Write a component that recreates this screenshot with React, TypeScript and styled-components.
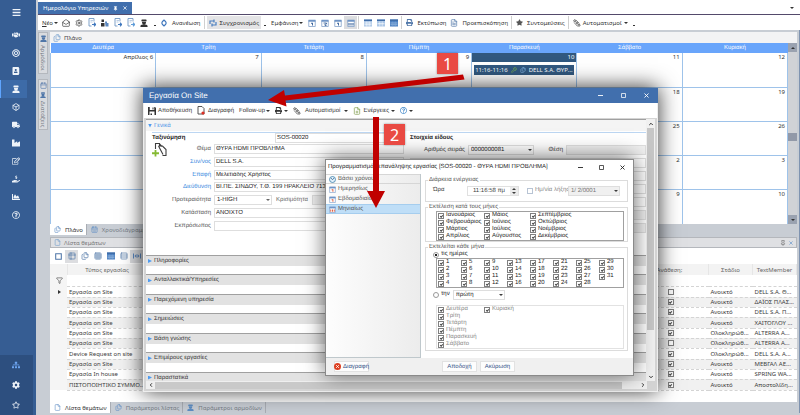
import React from "react";
import styled, { createGlobalStyle, css } from "styled-components";
import {
  FaBars, FaBullseye, FaAddressBook, FaTruck, FaIndustry, FaRegEdit, FaChartArea,
  FaRegQuestionCircle, FaSitemap, FaCog, FaRegStar, FaStar, FaPrint, FaHandshake, FaHandHoldingUsd,
} from "react-icons/fa";
import {
  Box, MailOpen, Settings, Filter, Calendar, CalendarDays, Table2, Rows3, Grid3x3,
  File, Files, FileText, FilePlus, Wrench, Pin, ChevronLeft, ChevronRight, ChevronUp, ChevronDown,
} from "lucide-react";

const Global = createGlobalStyle`
  *, *::before, *::after { box-sizing: border-box; }
  body { margin: 0; background: #fff; }
  button, input, select { font: inherit; color: inherit; text-rendering: inherit; margin: 0; padding: 0; border: 0; background: none; min-width: 0; }
  button { white-space: nowrap; }
  svg { display: block; flex: none; }
`;

const font = `"Noto Sans", "Open Sans", sans-serif`;
const narrowFont = `"Liberation Sans", Arial, sans-serif`;
const blue = "#416fad";
const steel = "#4f76a8";

/* ---------- shell ---------- */
const Page = styled.div`
  position: relative;
  display: flex;
  min-height: 100vh;
  overflow: hidden;
  font: 6px/10px ${font};
  color: #3c3c3c;
  background: #c8cdd4;
`;
const Sidebar = styled.nav`
  width: 36px;
  flex: none;
  display: flex;
  flex-direction: column;
  padding-top: 3px;
  background: #365d93;
  color: #eef3f9;
`;
const NavGroup = styled.div<{ $foot?: boolean }>`
  display: flex;
  flex-direction: column;
  ${(p) => p.$foot && css`
    margin-top: auto;
    width: 33px;
    background: #2d4f7f;
  `}
`;
const NavButton = styled.button<{ $active?: boolean; $tall?: boolean; $tint?: boolean }>`
  width: 27px;
  height: ${(p) => (p.$tall ? 20 : 18)}px;
  padding-left: 4px;
  display: flex;
  align-items: center;
  justify-content: center;
  color: ${(p) => (p.$tint ? "#6ea6f2" : "inherit")};
  background: ${(p) => (p.$active ? "#3d6ba8" : "none")};
  border-left: 1px solid ${(p) => (p.$active ? "#5fa5ff" : "transparent")};
  &:first-child { margin-bottom: ${(p) => (p.$tall ? 0 : 5)}px; }
`;
const Main = styled.main`
  flex: 1;
  min-width: 0;
  display: flex;
  flex-direction: column;
  padding: 0 0 2px 2px;
`;
const DocTabs = styled.div`
  height: 15px;
  display: flex;
  align-items: flex-end;
  justify-content: space-between;
  background: #fff;
  border-bottom: 1px solid #544a6b;
`;
const DocTab = styled.button`
  height: 12px;
  padding: 0 5px;
  display: flex;
  align-items: center;
  gap: 5px;
  background: ${blue};
  color: #fff;
`;
const Caret = styled.span`
  display: inline-block;
  flex: none;
  border: 2px solid transparent;
  border-top-color: currentColor;
  border-bottom-width: 0;
`;
const UpCaret = styled.span`
  border: 2px solid transparent;
  border-bottom-color: currentColor;
  border-top-width: 0;
`;
const DropButton = styled.button`
  width: 16px;
  height: 14px;
  color: #333;
`;
const Toolbar = styled.div<{ $tall?: boolean; $loose?: boolean }>`
  height: ${(p) => (p.$tall ? 16 : 15)}px;
  flex: none;
  display: flex;
  align-items: center;
  gap: ${(p) => (p.$loose ? 1 : 0)}px;
  background: #fff;
  padding: 0 2px;
  color: #333;
`;
const Tool = styled.button<{ $on?: boolean; $gap?: number }>`
  height: 13px;
  padding: 0 2px;
  display: flex;
  align-items: center;
  gap: ${(p) => p.$gap ?? 2}px;
  background: ${(p) => (p.$on ? "#e4e4e6" : "none")};
`;
const IconTool = styled.button<{ $on?: boolean; $dark?: boolean }>`
  width: 13px;
  height: 13px;
  flex: none;
  display: grid;
  place-items: center;
  color: ${(p) => (p.$dark ? "#333" : steel)};
  background: ${(p) => (p.$on ? "#dcdde0" : "none")};
`;
const Sep = styled.i`
  width: 1px;
  height: 13px;
  margin: 0 2px 0 1px;
  background: #d0d0d0;
`;
const More = styled.span`
  width: 2px;
  height: 1px;
  margin: 6px 3px 0;
  background: #333;
`;
const Body = styled.div`
  flex: 1;
  display: flex;
  gap: 2px;
  padding-top: 2px;
  min-height: 0;
  border-right: 1px solid #7f93b0;
`;
const SideTabs = styled.div`
  width: 10px;
  display: flex;
  flex-direction: column;
  gap: 5px;
`;
const SideTab = styled.button`
  width: 10px;
  display: flex;
  flex-direction: column;
  align-items: center;
  gap: 3px;
  padding: 2px 0;
  border: 1px solid #b4b8be;
  background: #d9dbdf;
  color: #777d86;
  span { writing-mode: vertical-rl; line-height: 8px; }
  svg { color: ${steel}; }
`;
const Panels = styled.div`
  flex: 1;
  min-width: 0;
  display: flex;
  flex-direction: column;
  padding-right: 2px;
`;
const PanelHead = styled.div<{ $low?: boolean }>`
  height: 11px;
  flex: none;
  display: flex;
  align-items: center;
  gap: 3px;
  padding: 0 3px;
  margin-top: ${(p) => (p.$low ? 2 : 0)}px;
  background: ${(p) => (p.$low ? "#dfe0e3" : "#f3f3f4")};
  border: ${(p) => (p.$low ? "1px solid #b4b7bc" : "0")};
  color: ${(p) => (p.$low ? "#777" : "#444")};
  svg { color: #6f9ccb; }
`;
const Spacer = styled.span`
  flex: 1;
`;

/* ---------- calendar ---------- */
const CalWrap = styled.div`
  height: 181px;
  flex: none;
  display: flex;
`;
const CalArea = styled.div`
  flex: 1;
  min-width: 0;
`;
const Cal = styled.table`
  width: 100%;
  height: 181px;
  border-collapse: collapse;
  table-layout: fixed;
  background: #fff;
  th {
    height: 10px;
    padding: 0;
    background: #69a5fb;
    color: #fff;
    font: 6px/10px ${narrowFont};
    text-rendering: geometricPrecision;
  }
  tbody tr { height: 34px; }
  td {
    border: 1px solid #9ec3ea;
    border-top-width: 0;
    padding: 0;
    vertical-align: top;
    text-align: right;
    line-height: 8px;
  }
  tr:last-child td { border-bottom: 0; }
`;
const DayNo = styled.div<{ $today?: boolean }>`
  padding: 0 2px;
  height: 9px;
  color: ${(p) => (p.$today ? "#fff" : "#333")};
  background: ${(p) => (p.$today ? "#31587f" : "none")};
`;
const Event = styled.button`
  display: flex;
  align-items: center;
  gap: 3px;
  width: calc(100% - 4px);
  height: 10px;
  margin: 3px 2px 0;
  padding: 0 1px;
  background: #31587f;
  color: #fff;
  font: 6px/9px ${font};
  overflow: hidden;
`;
const VBar = styled.div<{ $dark?: boolean }>`
  width: 9px;
  flex: none;
  display: flex;
  flex-direction: column;
  background: ${(p) => (p.$dark ? "#d0d2d6" : "#f0f0f0")};
  color: #333;
`;
const BarEnd = styled.button<{ $dark?: boolean }>`
  width: 9px;
  height: 9px;
  flex: none;
  display: grid;
  place-items: center;
  background: ${(p) => (p.$dark ? "#9aa2b0" : "none")};
`;
const CalThumb = styled.div`
  height: 8px;
  margin-top: 81px;
  background: #9299a8;
`;

const TabStrip = styled.div`
  height: 11px;
  flex: none;
  display: flex;
`;
const Tab = styled.button<{ $on?: boolean }>`
  display: flex;
  align-items: center;
  gap: 4px;
  padding: 0 3px 0 4px;
  height: 11px;
  border-right: 1px solid #a9adb4;
  background: ${(p) => (p.$on ? "#fff" : "none")};
  color: ${(p) => (p.$on ? "#333" : "#777d86")};
  svg { color: #5f8ec4; }
`;

/* ---------- task list ---------- */
const ListWrap = styled.div`
  flex: 1;
  min-height: 0;
  background: #fff;
`;
const List = styled.table`
  width: 100%;
  border-collapse: collapse;
  table-layout: fixed;
  line-height: 8px;
  th {
    height: 11px;
    padding: 0;
    font-weight: 400;
    color: #666;
    background: #f3f3f3;
    border-right: 1px solid #e6e6e6;
  }
  td {
    padding: 0 0 0 2px;
    border-bottom: 1px dashed #d4d4d4;
    white-space: nowrap;
  }
  td:first-child { background: #f5f5f5; border-bottom: 0; }
  svg { margin: 0 auto; }
`;
const ListRow = styled.tr<{ $alt?: boolean; $tall?: boolean }>`
  height: ${(p) => (p.$tall ? 11 : 10)}px;
  background: ${(p) => (p.$alt ? "#f1f1f1" : "#fff")};
`;
const Cell = styled.td<{ $center?: boolean }>`
  text-align: ${(p) => (p.$center ? "center" : "left")};
`;
const RowMark = styled.i`
  display: inline-block;
  border: 2px solid transparent;
  border-left: 3px solid #333;
  border-right-width: 0;
`;
const Tick = styled.input`
  appearance: none;
  width: 6px;
  height: 6px;
  flex: none;
  display: inline-grid;
  place-items: center;
  vertical-align: middle;
  border: 1px solid #808080;
  background: #fff;
  &:checked::after {
    content: "";
    width: 3px;
    height: 2px;
    border: solid #444;
    border-width: 0 0 1px 1px;
    transform: rotate(-45deg);
  }
  &:disabled { border-color: #b8c4d4; }
`;
const Radio = styled.input`
  appearance: none;
  width: 6px;
  height: 6px;
  flex: none;
  display: inline-grid;
  place-items: center;
  border: 1px solid #999;
  border-radius: 50%;
  background: #fff;
  &:checked::after { content: ""; width: 2px; height: 2px; background: #222; }
`;

/* ---------- windows ---------- */
const Window = styled.section<{ $x: number; $y: number; $w: number; $h: number; $inner?: boolean }>`
  position: absolute;
  left: ${(p) => p.$x}px;
  top: ${(p) => p.$y}px;
  width: ${(p) => p.$w}px;
  height: ${(p) => p.$h}px;
  display: flex;
  flex-direction: column;
  text-rendering: geometricPrecision;
  font-family: ${narrowFont};
  background: ${(p) => (p.$inner ? "#fff" : "#d4d4d4")};
  border: 1px solid ${(p) => (p.$inner ? "#8a8a8a" : "#eee")};
  box-shadow: 0 -1px 20px rgba(0, 0, 0, ${(p) => (p.$inner ? 0.6 : 0.8)});
`;
const TitleBar = styled.header<{ $plain?: boolean }>`
  height: ${(p) => (p.$plain ? 14 : 15)}px;
  flex: none;
  display: flex;
  align-items: center;
  padding-left: ${(p) => (p.$plain ? 2 : 6)}px;
  font-size: ${(p) => (p.$plain ? 6 : 8)}px;
  background: ${(p) => (p.$plain ? "#fff" : blue)};
  color: ${(p) => (p.$plain ? "#222" : "#fff")};
  margin: ${(p) => (p.$plain ? "0" : "-1px -1px 0")};
  h2 { flex: 1; margin: 0; font: inherit; white-space: nowrap; }
`;
const WinButton = styled.button<{ $narrow?: boolean }>`
  width: ${(p) => (p.$narrow ? 21 : 23)}px;
  height: 13px;
  display: grid;
  place-items: center;
`;
const FormArea = styled.div`
  flex: 1;
  min-height: 0;
  margin: 1px 2px 0;
  display: flex;
`;
const FormScroll = styled.div`
  flex: 1;
  min-width: 0;
  overflow: hidden;
  background: #fff;
`;
const SectionHead = styled.button<{ $open?: boolean }>`
  width: 100%;
  height: ${(p) => (p.$open ? 12 : 11)}px;
  display: flex;
  align-items: center;
  gap: 2px;
  padding-left: 2px;
  text-align: left;
  border-top: 1px solid #a0a0a0;
  background: ${(p) => (p.$open ? "#f4f4f4" : "#e2e2e2")};
  color: ${(p) => (p.$open ? "#4b93e8" : "#333")};
`;
const Mark = styled.i<{ $open?: boolean }>`
  width: 4px;
  height: 4px;
  flex: none;
  background: #4e9bf0;
  clip-path: ${(p) => (p.$open ? "polygon(0 0, 100% 0, 50% 100%)" : "polygon(0 0, 100% 50%, 0 100%)")};
`;
const General = styled.div`
  height: 124px;
  display: grid;
  grid-template-columns: 258px 1fr;
  line-height: 8px;
`;
const Half = styled.div`
  position: relative;
  padding: 1px 0 0 6px;
`;
const HalfTop = styled.div`
  height: 10px;
  display: grid;
  grid-template-columns: 123px 1fr;
  align-items: center;
  border-top: 1px solid #bcd6f2;
  font-weight: 700;
  white-space: nowrap;
  color: #222;
`;
const Value = styled.input<{ $off?: boolean }>`
  width: 100%;
  height: 10px;
  padding: 0 1px;
  border: 1px solid #dedede;
  background: ${(p) => (p.$off ? "#f0f0f0" : "#fff")};
  font-weight: 400;
  color: #222;
`;
const Fields = styled.div`
  height: 89px;
  margin-top: 1px;
  display: grid;
  grid-template-columns: 59px 1fr;
  grid-auto-rows: 1fr;
  column-gap: 3px;
  align-items: center;
`;
const FieldLabel = styled.label<{ $link?: boolean }>`
  text-align: right;
  white-space: nowrap;
  color: ${(p) => (p.$link ? "#3a8ae0" : "#555")};
`;
const Side = styled.div`
  display: grid;
  grid-template-columns: 58px 32px 1fr;
  gap: 4px;
  align-items: center;
  color: #666;
`;
const Picker = styled.div<{ $w?: number }>`
  position: relative;
  width: ${(p) => (p.$w ? p.$w + "px" : "100%")};
  select {
    display: block;
    appearance: none;
    width: 100%;
    height: 10px;
    padding: 0 2px;
    border: 1px solid #dedede;
    background: #fff;
    line-height: 8px;
    color: #222;
  }
  select:disabled { background: #f0f0f0; color: #777; opacity: 1; }
  ${Caret} { position: absolute; right: 2px; top: 4px; }
`;
const AddDoc = styled.div`
  position: absolute;
  left: 6px;
  top: 11px;
`;
const RightFields = styled.div`
  margin-top: 3px;
  display: grid;
  grid-template-columns: 55px 66px 26px 1fr;
  grid-auto-rows: 10px;
  gap: 3px;
  align-items: center;
  text-align: right;
`;
const Wide = styled.div`
  grid-column: 1 / -1;
`;
const Folded = styled.div`
  display: grid;
  grid-auto-rows: 1fr;
  height: 136px;
`;
const HBar = styled.div`
  height: 8px;
  flex: none;
  margin: 0 10px 2px 2px;
  display: flex;
  align-items: center;
  background: #efefef;
`;
const HThumb = styled.div`
  flex: 1;
  height: 7px;
  margin-right: 16px;
  background: #c9c9c9;
`;
const VThumb = styled.div`
  height: 202px;
  margin: 0 1px;
  background: #c6c6c6;
`;

/* ---------- recurrence dialog ---------- */
const Split = styled.div`
  flex: 1;
  min-height: 0;
  display: flex;
`;
const Modes = styled.div`
  width: 95px;
  flex: none;
  border-right: 1px solid #bfc8cc;
  border-bottom: 1px solid #bfc8cc;
  background: linear-gradient(90deg, #fdfdfd, #ececec);
`;
const Mode = styled.button<{ $on?: boolean; $head?: boolean }>`
  width: 100%;
  height: 10px;
  padding-left: 3px;
  display: flex;
  align-items: center;
  gap: 2px;
  line-height: 8px;
  color: #555;
  border: solid ${(p) => (p.$on ? "#a5cdee" : "#d6d6d6")};
  border-width: ${(p) => (p.$on || p.$head ? "1px 0" : "0")};
  background: ${(p) => (p.$on ? "#bfdef7" : "none")};
`;
const Groups = styled.form`
  flex: 1;
  min-width: 0;
  padding: 3px 5px 0 4px;
  line-height: 7px;
`;
const Group = styled.fieldset<{ $h: number }>`
  height: ${(p) => p.$h}px;
  margin: 0 0 2px;
  padding: 0 3px 0 7px;
  border: 1px solid #dcdcdc;
  min-width: 0;
  legend { margin-left: -5px; padding: 0 1px; line-height: 7px; color: #555; }
`;
const Line = styled.div`
  display: flex;
  align-items: center;
  gap: 3px;
  height: 13px;
`;
const Labelled = styled.label<{ $dim?: boolean }>`
  display: flex;
  align-items: center;
  gap: 2px;
  height: 7px;
  white-space: nowrap;
  color: ${(p) => (p.$dim ? "#888" : "#222")};
`;
const TimeLabel = styled.label`
  width: 31px;
`;
const TimeBox = styled.div`
  width: 52px;
  height: 10px;
  margin-right: 5px;
  display: flex;
  border: 1px solid #e0e0e0;
  input { flex: 1; text-align: center; line-height: 8px; }
`;
const Spin = styled.button`
  width: 8px;
  display: grid;
  place-items: center;
  background: #ececec;
`;
const ExpiryLabel = styled(Labelled)`
  width: 38px;
`;
const Choices = styled.div<{ $rows: number; $col: number; $soft?: boolean }>`
  margin: ${(p) => (p.$soft ? 4 : 0)}px 0 0 3px;
  padding-left: 1px;
  display: grid;
  grid-auto-flow: column;
  grid-template-rows: repeat(${(p) => p.$rows}, 7px);
  grid-auto-columns: ${(p) => p.$col}px;
  border: 1px solid ${(p) => (p.$soft ? "#e2e2e2" : "#a0a0a0")};
`;
const Footer = styled.footer`
  height: 17px;
  flex: none;
  display: flex;
  align-items: center;
  gap: 3px;
  padding: 0 118px 0 8px;
  background: #f0f0f0;
`;
const PushButton = styled.button`
  width: 35px;
  height: 11px;
  display: flex;
  align-items: center;
  justify-content: center;
  gap: 2px;
  background: #fdfdfd;
  border: 1px solid #e2e2e2;
  color: #2f4f85;
`;

/* ---------- annotations ---------- */
const Arrows = styled.svg`
  position: absolute;
  left: 0;
  top: 0;
  pointer-events: none;
`;
const Badge = styled.div<{ $x: number; $y: number }>`
  position: absolute;
  left: ${(p) => p.$x}px;
  top: ${(p) => p.$y}px;
  width: 21px;
  height: 21px;
  display: grid;
  place-items: center;
  background: #e94a43;
  color: #fff;
  font: 16px/20px ${font};
  box-shadow: 0 0 2px rgba(0, 0, 0, 0.4);
`;

const Worker = ({ size = 9 }: { size?: number }) => (
  <svg width={size} height={size} viewBox="0 0 18 18" fill="currentColor">
    <path d="M3 4 4 1h10l1 3v1H3zM4.500 6h9v2a4.500 4.500 0 0 1-9 0zM1 18v-2c0-2 2-3 5-3.500h6c3 .5 5 1.500 5 3.500v2z" />
  </svg>
);
const CalendarIcon = ({ size = 8, n = 2, orange = false }: { size?: number; n?: number; orange?: boolean }) => (
  <svg width={size} height={size} viewBox="0 0 16 16">
    <path d="M1.500 3h13v12h-13z" fill="#fff" stroke="#7d9cc6" strokeWidth="1.500" />
    <path d="M1 1.500h14V5.500H1z" fill="#6f94c6" />
    {n === 1 && <path d="M6 7.500h4V13H8V9.500H6z" fill={orange ? "#e05a3a" : "#41699f"} />}
    {n === 2 && <path d="M5 8h6v2H8v3h3" fill="none" stroke={orange ? "#e05a3a" : "#41699f"} strokeWidth="1.800" />}
    {n === 3 && <path d="M4 8v5M8 8v5M12 8v5" stroke={orange ? "#e05a3a" : "#41699f"} strokeWidth="2.200" />}
  </svg>
);
const GridIcon = ({ rows = 3, solid = false }: { rows?: number; solid?: boolean }) => (
  <svg width="8" height="8" viewBox="0 0 16 16">
    <path d="M0 1h16v14H0z" fill={solid ? "#4a7fc0" : "#a9c5e6"} />
    <path d="M0 1h16v3H0z" fill="#3f6da8" />
    <path d={rows === 2 ? "M1 9.500h14" : "M1 8h14M1 11.500h14"} stroke={solid ? "#a9c5e6" : "#fff"} strokeWidth="1.500" />
    <path d="M5.500 5v10M10.500 5v10" stroke={solid ? "#84aadb" : "#fff"} />
  </svg>
);
const SyncIcon = () => (
  <svg width="8" height="8" viewBox="0 0 16 16" fill="none" stroke="#4a7fc0" strokeWidth="2.400">
    <path d="M2 10V4h8M10 1v6M14 6v6H6M6 9v6" />
  </svg>
);
const Diamond = () => (
  <svg width="6" height="8" viewBox="0 0 12 16" fill="none" stroke="#3f77bd" strokeWidth="2.400">
    <path d="M2 6l4-4 4 4M2 10l4 4 4-4M2 6v4M10 6v4" />
  </svg>
);
const GearsIcon = () => (
  <svg width="8" height="8" viewBox="0 0 16 16" fill="none" stroke="#555" strokeWidth="1.800">
    <circle cx="3.500" cy="3.500" r="2" /><circle cx="8" cy="8" r="2" /><circle cx="12" cy="12.500" r="2" />
    <path d="M6 2l7 7M2 7l7 8" strokeWidth="1.200" />
  </svg>
);
const LinkedPeople = () => (
  <svg width="8" height="8" viewBox="0 0 16 16">
    <path d="M1 1h5v5H1zM0 8h7v7H0z" fill="#333" />
    <path d="M8 5h4v3h3v7H9z" fill="#5b87bf" />
  </svg>
);
const ArrowsInward = () => (
  <svg width="8" height="6" viewBox="0 0 16 12" fill="#5b87bf">
    <path d="M0 1h2v10H0zM3 6l4-4v8zM14 1h2v10h-2zM13 6l-4-4v8z" />
  </svg>
);
const DocMove = ({ a = "#3f77bd" }: { a?: string }) => (
  <svg width="8" height="9" viewBox="0 0 16 18" fill="none">
    <path d="M12 7V1H2v15h5" stroke="#7397c3" strokeWidth="1.800" />
    <path d="M5 5h5M5 8h4" stroke="#9db8d8" strokeWidth="1.400" />
    <path d="M8 13h7M12 9.500l3.500 3.500-3.500 3.500" stroke={a} strokeWidth="2.200" />
  </svg>
);
const DeleteDoc = () => (
  <svg width="8" height="9" viewBox="0 0 16 18">
    <path d="M2 1h8l4 4v11H2z" fill="#fff" stroke="#444" strokeWidth="1.800" />
    <circle cx="12" cy="14" r="3.200" fill="#dd2f24" />
  </svg>
);
const SaveIcon = () => (
  <svg width="8" height="8" viewBox="0 0 16 16">
    <path d="M0 0h14l2 2v14H0z" fill="#333" />
    <path d="M3.500 0h9v6h-9zM3 9h10v7H3z" fill="#fff" />
    <path d="M9 1h2v4H9zM5 13h3v3H5z" fill="#333" />
  </svg>
);
const ClockIcon = () => (
  <svg width="7" height="7" viewBox="0 0 14 14">
    <circle cx="7" cy="7" r="6" fill="#e2f0fb" stroke="#3b7fa8" strokeWidth="1.600" />
    <path d="M4 4l3 3.500L10 4" fill="none" stroke="#2a5e8a" strokeWidth="1.400" />
  </svg>
);
const RedCross = () => (
  <svg width="7" height="7" viewBox="0 0 14 14">
    <circle cx="7" cy="7" r="7" fill="#dd3f22" />
    <path d="M4.500 4.500l5 5M9.500 4.500l-5 5" stroke="#fff" strokeWidth="2" />
  </svg>
);
const AddDocIcon = () => (
  <svg width="15" height="15" viewBox="0 0 30 30" fill="none">
    <path d="M7 14V3h8v5M15 4l5 5M13 8h8l7 7v12h-7M13 8l9 17" stroke="#3d3d3d" strokeWidth="2.200" />
    <path d="M7 16v13M0 22.500h14" stroke="#86ba33" strokeWidth="3.600" />
  </svg>
);
const Cross = ({ s = 5 }: { s?: number }) => (
  <svg width={s} height={s} viewBox="0 0 10 10" stroke="currentColor" strokeWidth="1.800"><path d="M1 1l8 8M9 1l-8 8" /></svg>
);
const Square = ({ s = 5 }: { s?: number }) => (
  <svg width={s} height={s} viewBox="0 0 10 10" fill="none" stroke="currentColor" strokeWidth="1.500"><path d="M1 1h8v8H1z" /></svg>
);
const Dash = ({ s = 5 }: { s?: number }) => (
  <svg width={s} height={s} viewBox="0 0 10 10" stroke="currentColor" strokeWidth="1.800"><path d="M0 5h10" /></svg>
);
const WinButtons = ({ narrow = false }: { narrow?: boolean }) => (
  <>
    <WinButton $narrow={narrow} aria-label="Ελαχιστοποίηση"><Dash /></WinButton>
    <WinButton $narrow={narrow} aria-label="Μεγιστοποίηση"><Square /></WinButton>
    <WinButton $narrow={narrow} aria-label="Κλείσιμο"><Cross /></WinButton>
  </>
);

const navIcons = [
  <FaBars size={9} />, <FaHandshake size={8} />, <FaBullseye size={8} />, <FaAddressBook size={8} />, <Worker size={8} />,
  <Box size={8} strokeWidth={2.5} />, <FaTruck size={8} />, <FaIndustry size={8} />, <FaRegEdit size={8} />,
  <FaHandHoldingUsd size={8} />, <FaChartArea size={8} />, <FaRegQuestionCircle size={8} />,
];
const days = ["Δευτέρα", "Τρίτη", "Τετάρτη", "Πέμπτη", "Παρασκευή", "Σάββατο", "Κυριακή"];
const weeks = [
  ["Απρίλιος 6", 7, 8, 9, 10, 11, 12],
  [13, 14, 15, 16, 17, 18, 19],
  [20, 21, 22, 23, 24, 25, 26],
  [27, 28, 29, 30, 1, 2, 3],
  [4, 5, 6, 7, 8, 9, 10],
];
const tasks: [string, boolean, string, string][] = [
  ["Εργασία on Site", false, "Ανοικτό", "DELL S.A. Θ..."],
  ["Εργασία on Site", true, "Ανοικτό", "ΔΑΪΟΣ ΠΛΑΣ..."],
  ["Εργασία on Site", true, "Ανοικτό", "DELL S.A. Π..."],
  ["Εργασία on Site", true, "Ανοικτό", "ΧΑΙΤΟΓΛΟΥ ..."],
  ["Εργασία on Site", true, "Ολοκληρώθ...", "ALTERRA A..."],
  ["Εργασία on Site", false, "Ολοκληρώθ...", "ALTERRA A..."],
  ["Device Request on site", true, "Ολοκληρώθ...", "DELL S.A. A..."],
  ["Εργασία on Site", true, "Ανοικτό", "ΜΕΒΓΑΛ ΑΕ..."],
  ["Εργασία In house", true, "Ανοικτό", "SPRING WA..."],
  ["ΠΙΣΤΟΠΟΙΗΤΙΚΟ ΣΥΜΜΟ...", true, "Ανοικτό", "Αποστολίδη..."],
];
const months = ["Ιανουάριος", "Φεβρουάριος", "Μάρτιος", "Απρίλιος", "Μάιος", "Ιούνιος", "Ιούλιος", "Αύγουστος", "Σεπτέμβριος", "Οκτώβριος", "Νοέμβριος", "Δεκέμβριος"];
const folded = ["Πληροφορίες", "Ανταλλακτικά/Υπηρεσίες", "Παρεχόμενη υπηρεσία", "Σημειώσεις", "Βάση γνώσης", "Επιμέρους εργασίες", "Παραστατικά"];

const MainToolbar = () => (
  <Toolbar>
    <Tool $gap={1}><span><u>Ν</u>έο</span><Caret /></Tool>
    <IconTool $dark><MailOpen size={8} /></IconTool>
    <IconTool $dark><Settings size={8} /></IconTool>
    <IconTool><DocMove /></IconTool>
    <IconTool><LinkedPeople /></IconTool>
    <IconTool><DocMove /></IconTool>
    <IconTool><DocMove a="#5e9bd8" /></IconTool>
    <IconTool $dark><Worker size={8} /></IconTool>
    <More />
    <Tool $gap={5}><Diamond />Ανανέωση</Tool>
    <Sep />
    <Tool $on $gap={3}><SyncIcon />Συγχρονισμός</Tool>
    <More />
    <Tool $gap={1}>Εμφάνιση<Caret /></Tool>
    <IconTool><CalendarIcon n={1} /></IconTool>
    <IconTool><CalendarIcon n={2} /></IconTool>
    <IconTool><CalendarIcon n={1} /></IconTool>
    <IconTool $on><CalendarIcon n={3} /></IconTool>
    <Sep />
    <IconTool><GridIcon /></IconTool>
    <IconTool><GridIcon rows={2} /></IconTool>
    <IconTool><GridIcon solid /></IconTool>
    <Sep />
    <Tool $gap={4}><FaPrint size={7} color={steel} />Εκτύπωση</Tool>
    <Tool $gap={4}><FileText size={8} color={steel} />Προεπισκόπηση</Tool>
    <Sep />
    <Tool $gap={4}><FaStar size={7} color="#555" />Συντομεύσεις</Tool>
    <Sep />
    <Tool><GearsIcon />Αυτοματισμοί<Caret /></Tool>
    <More />
  </Toolbar>
);

const WeekGrid = () => (
  <CalWrap>
    <CalArea>
      <Cal>
        <thead><tr>{days.map((d) => <th key={d}>{d}</th>)}</tr></thead>
        <tbody>
          {weeks.map((w, r) => (
            <tr key={r}>
              {w.map((d, c) => (
                <td key={c}>
                  <DayNo $today={r === 0 && c === 4}>{d}</DayNo>
                  {r === 0 && c === 4 && (
                    <Event>11:16-11:16<Wrench size={6} color="#8bc34a" /><Files size={6} color="#8fc1f0" />DELL S.A. ΘΥΡ...</Event>
                  )}
                </td>
              ))}
            </tr>
          ))}
        </tbody>
      </Cal>
    </CalArea>
    <VBar $dark>
      <BarEnd $dark aria-label="Πάνω"><UpCaret /></BarEnd>
      <CalThumb />
      <Spacer />
      <BarEnd $dark aria-label="Κάτω"><Caret /></BarEnd>
    </VBar>
  </CalWrap>
);

const TaskList = () => (
  <ListWrap>
    <List>
      <colgroup>
        <col width="17" /><col width="80" /><col /><col width="78" /><col width="44" /><col width="44" />
      </colgroup>
      <thead><tr><th /><th>Τύπος εργασίας</th><th /><th>Ανάθεση;</th><th>Στάδιο</th><th>TextMember</th></tr></thead>
      <tbody>
        <ListRow $tall><Cell><Filter size={7} /></Cell><Cell colSpan={5} /></ListRow>
        {tasks.map(([type, on, stage, member], i) => (
          <ListRow key={i} $alt={i % 2 === 1} $tall={i % 3 === 0}>
            <Cell $center>{i === 0 && <RowMark />}</Cell>
            <Cell>{type}</Cell>
            <Cell />
            <Cell $center><Tick type="checkbox" defaultChecked={on} aria-label="Ανάθεση" /></Cell>
            <Cell>{stage}</Cell>
            <Cell>{member}</Cell>
          </ListRow>
        ))}
      </tbody>
    </List>
  </ListWrap>
);

const TaskWindow = () => (
  <Window $x={143} $y={88} $w={515} $h={304}>
    <TitleBar><h2>Εργασία On Site</h2><WinButtons /></TitleBar>
    <Toolbar $loose>
      <Tool><SaveIcon />Αποθήκευση</Tool>
      <Tool $gap={3}><DeleteDoc />Διαγραφή</Tool>
      <Tool $gap={1}>Follow-up<Caret /></Tool>
      <Tool><FaPrint size={7} /><Caret /></Tool>
      <Tool $gap={4}><GearsIcon />Αυτοματισμοί<Caret /></Tool>
      <Tool><FilePlus size={8} color="#7d9c48" />Ενέργειες<Caret /></Tool>
      <Tool><FaRegQuestionCircle size={7} color="#3f87c9" /><Caret /></Tool>
    </Toolbar>
    <FormArea>
      <FormScroll>
        <SectionHead $open><Mark $open />Γενικά</SectionHead>
        <General>
          <Half>
            <HalfTop><span>Ταξινόμηση</span><Value aria-label="Ταξινόμηση" defaultValue="SOS-00020" /></HalfTop>
            <AddDoc><AddDocIcon /></AddDoc>
            <Fields>
              <FieldLabel htmlFor="f1">Θέμα</FieldLabel><Value id="f1" defaultValue="ΘΥΡΑ HDMI ΠΡΟΒΛΗΜΑ" />
              <FieldLabel htmlFor="f2" $link>Συν/νος</FieldLabel><Value id="f2" defaultValue="DELL S.A." />
              <FieldLabel htmlFor="f3" $link>Επαφή</FieldLabel><Value id="f3" defaultValue="Μελετιάδης Χρήστος" />
              <FieldLabel htmlFor="f4" $link>Διεύθυνση</FieldLabel><Value id="f4" defaultValue="ΒΙ.ΠΕ. ΣΙΝΔΟΥ, Τ.Θ. 199 ΗΡΑΚΛΕΙΟ 71305 23" />
              <FieldLabel htmlFor="f5">Προτεραιότητα</FieldLabel>
              <Side>
                <Picker><select id="f5" defaultValue="1-HIGH"><option>1-HIGH</option></select><Caret /></Picker>
                <label htmlFor="f8">Κρισιμότητα</label><Value id="f8" $off />
              </Side>
              <FieldLabel htmlFor="f6">Κατάσταση</FieldLabel><Value id="f6" defaultValue="ΑΝΟΙΧΤΟ" />
              <FieldLabel htmlFor="f7">Εκπρόσωπος</FieldLabel><Value id="f7" />
            </Fields>
          </Half>
          <Half>
            <HalfTop><span>Στοιχεία είδους</span></HalfTop>
            <RightFields>
              <label htmlFor="r1">Αριθμός σειράς</label>
              <Picker><select id="r1" defaultValue="0000000081"><option>0000000081</option></select><Caret /></Picker>
              <label htmlFor="r2">Θέση</label><Value id="r2" $off />
              {[0, 1, 2, 3, 4, 5].map((i) => <Wide key={i}><Value $off={i > 3} aria-label="Είδος" /></Wide>)}
            </RightFields>
          </Half>
        </General>
        <Folded>{folded.map((f) => <SectionHead key={f}><Mark />{f}</SectionHead>)}</Folded>
      </FormScroll>
      <VBar>
        <BarEnd aria-label="Πάνω"><ChevronUp size={6} strokeWidth={4} /></BarEnd>
        <VThumb />
        <Spacer />
        <BarEnd aria-label="Κάτω"><ChevronDown size={6} strokeWidth={4} /></BarEnd>
      </VBar>
    </FormArea>
    <HBar>
      <BarEnd aria-label="Αριστερά"><ChevronLeft size={6} strokeWidth={4} /></BarEnd>
      <HThumb />
      <BarEnd aria-label="Δεξιά"><ChevronRight size={6} strokeWidth={4} /></BarEnd>
    </HBar>
  </Window>
);

const TickItem = ({ text, dim }: { text: string; dim?: boolean }) => (
  <Labelled $dim={dim}><Tick type="checkbox" defaultChecked />{text}</Labelled>
);

const RepeatDialog = () => (
  <Window $inner $x={325} $y={159} $w={309} $h={217}>
    <TitleBar $plain>
      <h2>Προγραμματισμός επανάληψης εργασίας [SOS-00020 - ΘΥΡΑ HDMI ΠΡΟΒΛΗΜΑ]</h2>
      <WinButtons narrow />
    </TitleBar>
    <Split>
      <Modes>
        <Mode $head><ClockIcon />Βάσει χρόνου</Mode>
        <Mode><CalendarIcon size={7} n={1} orange />Ημερησίως</Mode>
        <Mode><CalendarIcon size={7} n={1} orange />Εβδομαδιαίως</Mode>
        <Mode $on><CalendarIcon size={7} n={3} orange />Μηνιαίως</Mode>
      </Modes>
      <Groups>
        <Group $h={25}>
          <legend>Διάρκεια ενέργειας</legend>
          <Line>
            <TimeLabel htmlFor="t1">Ώρα</TimeLabel>
            <TimeBox><input id="t1" defaultValue="11:16:58 πμ" /><Spin type="button" aria-label="Αλλαγή ώρας"><UpCaret /><Caret /></Spin></TimeBox>
            <ExpiryLabel $dim><Tick type="checkbox" disabled />Ημ/νία λήξης</ExpiryLabel>
            <Picker $w={52}><select disabled aria-label="Ημ/νία λήξης"><option>1/ 2/0001</option></select><Caret /></Picker>
          </Line>
        </Group>
        <Group $h={38}>
          <legend>Εκτέλεση κατά τους μήνες</legend>
          <Choices $rows={4} $col={46}>{months.map((m) => <TickItem key={m} text={m} />)}</Choices>
        </Group>
        <Group $h={107}>
          <legend>Εκτελείται κάθε μήνα</legend>
          <Labelled><Radio type="radio" name="when" defaultChecked />τις ημέρες</Labelled>
          <Choices $rows={4} $col={23}>{Array.from({ length: 31 }, (_, i) => <TickItem key={i} text={String(i + 1)} />)}</Choices>
          <Line>
            <Labelled><Radio type="radio" name="when" />την</Labelled>
            <Picker $w={52}><select aria-label="Σειρά ημέρας"><option>πρώτη</option></select><Caret /></Picker>
          </Line>
          <Choices $soft $rows={6} $col={46}>{days.map((d) => <TickItem key={d} text={d} dim />)}</Choices>
        </Group>
      </Groups>
    </Split>
    <Footer>
      <PushButton><RedCross />Διαγραφή</PushButton>
      <Spacer />
      <PushButton>Αποδοχή</PushButton>
      <PushButton>Ακύρωση</PushButton>
    </Footer>
  </Window>
);

export default function App() {
  return (
    <Page>
      <Global />
      <Sidebar>
        <NavGroup>{navIcons.map((ic, i) => <NavButton key={i} $active={i === 4}>{ic}</NavButton>)}</NavGroup>
        <NavGroup $foot>
          <NavButton $tall $tint><FaSitemap size={8} /></NavButton>
          <NavButton $tall><FaCog size={8} /></NavButton>
          <NavButton $tall><FaRegStar size={8} /></NavButton>
        </NavGroup>
      </Sidebar>
      <Main>
        <DocTabs>
          <DocTab>Ημερολόγιο Υπηρεσιών<Pin size={5} fill="currentColor" /><Cross s={4} /></DocTab>
          <DropButton aria-label="Καρτέλες"><Caret /></DropButton>
        </DocTabs>
        <MainToolbar />
        <Body>
          <SideTabs>
            <SideTab><Worker size={7} /><span>Αρμόδιοι</span></SideTab>
            <SideTab><Calendar size={7} /><Worker size={6} /><span>Διατάξεις</span></SideTab>
          </SideTabs>
          <Panels>
            <PanelHead><Files size={8} />Πλάνο</PanelHead>
            <WeekGrid />
            <TabStrip>
              <Tab $on><Files size={7} />Πλάνο</Tab>
              <Tab><CalendarDays size={7} />Χρονοδιάγραμμα</Tab>
            </TabStrip>
            <PanelHead $low>
              <File size={7} />Λίστα θεμάτων<Spacer /><Pin size={6} color="#555" /><Cross s={4} />
            </PanelHead>
            <Toolbar $tall>
              <IconTool><Square s={7} /></IconTool>
              <IconTool $on><Table2 size={8} /></IconTool>
              <IconTool><Files size={8} /></IconTool>
              <IconTool><Grid3x3 size={8} /></IconTool>
              <IconTool><GridIcon solid /></IconTool>
              <IconTool><Rows3 size={8} /></IconTool>
              <IconTool $on><ArrowsInward /></IconTool>
            </Toolbar>
            <TaskList />
            <TabStrip>
              <Tab $on><File size={7} />Λίστα θεμάτων</Tab>
              <Tab><Files size={7} />Παράμετροι λίστας</Tab>
              <Tab><Worker size={7} />Παράμετροι αρμοδίων</Tab>
            </TabStrip>
          </Panels>
        </Body>
      </Main>
      <TaskWindow />
      <RepeatDialog />
      <Arrows width="800" height="415" viewBox="0 0 800 415" fill="#c00000">
        <path d="M463 74.500 464.500 79.500 285.500 100.500 286.500 106.500 268 100 284 90 285 95.500z" />
        <path d="M373 117h6v74h6l-9 17-9-17h6z" />
      </Arrows>
      <Badge $x={437} $y={53}>1</Badge>
      <Badge $x={384} $y={124}>2</Badge>
    </Page>
  );
}
